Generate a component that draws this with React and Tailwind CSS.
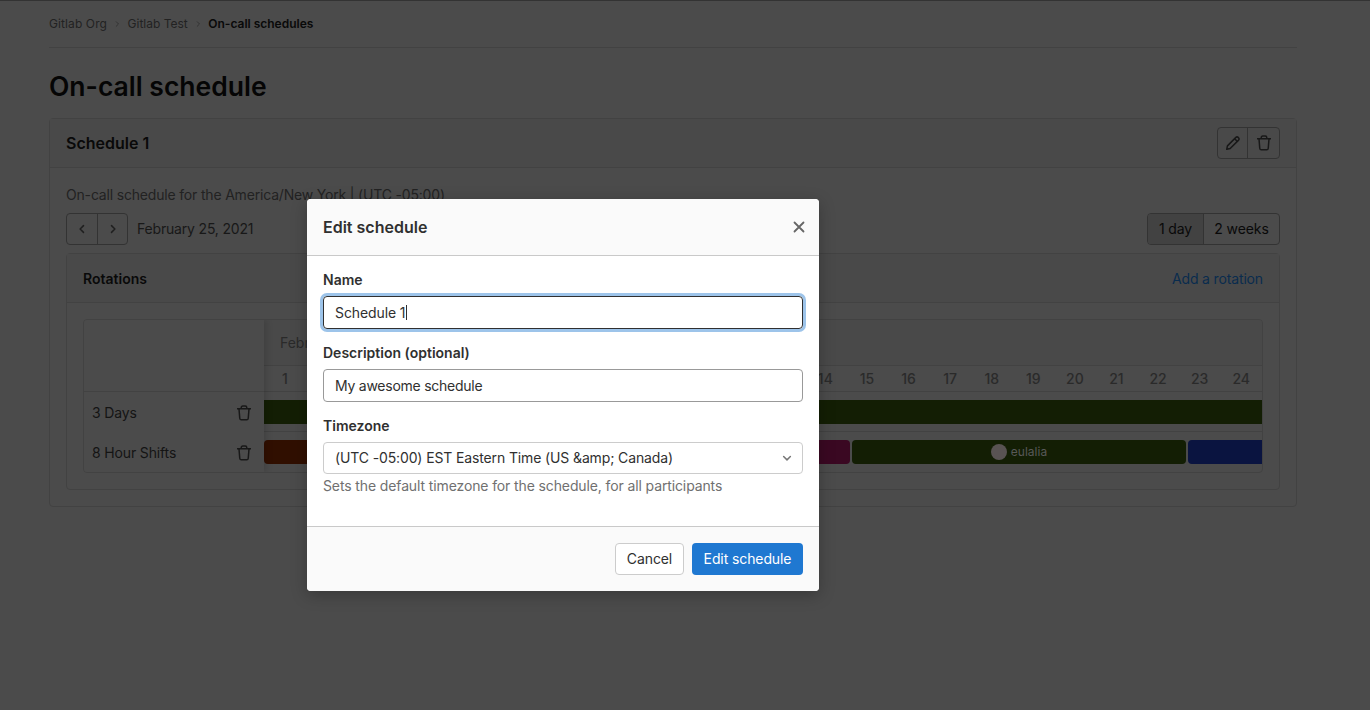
const hours = Array.from({ length: 24 }, (_, i) => i + 1);

function Trash({ className = "" }) {
  return (
    <svg viewBox="0 0 16 16" className={className} fill="none" stroke="currentColor" strokeWidth="1.5">
      <path d="M1 3.75h14" />
      <path d="M5.25 3.5V2.6c0-.9.6-1.6 1.5-1.6h2.5c.9 0 1.5.7 1.5 1.6v.9" />
      <path d="M3 4l.75 9.2c.07.9.75 1.55 1.6 1.55h5.3c.85 0 1.53-.65 1.6-1.55L13 4" />
    </svg>
  );
}

function Pencil({ className = "" }) {
  return (
    <svg viewBox="0 0 16 16" className={className} fill="none" stroke="currentColor" strokeWidth="1.5" strokeLinejoin="round">
      <path d="M1.75 14.25l.7-3.4L10.9 2.4a1.6 1.6 0 0 1 2.25 0l.45.45a1.6 1.6 0 0 1 0 2.25l-8.45 8.45z" />
      <path d="M9.6 3.7l2.7 2.7" />
    </svg>
  );
}

function Chevron({ dir, className = "" }) {
  const d = { left: "M10 3.5L5.5 8l4.5 4.5", right: "M6 3.5L10.5 8 6 12.5", down: "M3.5 6L8 10.5 12.5 6" }[dir];
  return (
    <svg viewBox="0 0 16 16" className={className} fill="none" stroke="currentColor" strokeWidth="2" strokeLinecap="round" strokeLinejoin="round">
      <path d={d} />
    </svg>
  );
}

function Rotation({ name, last }) {
  return (
    <div className={`flex items-center justify-between pl-2 pr-[12px] text-sm tracking-[-0.15px] text-[#141414] ${last ? "h-[40px]" : "h-[41px]"}`}>
      <span>{name}</span>
      <Trash className="w-4 h-4 text-[#181818]" />
    </div>
  );
}

function Page() {
  return (
    <div className="h-[710px] bg-[#4b4b4b] border-t border-[#333] pl-[49px] pr-[73px]">
      <nav className="h-[47px] flex items-center gap-[6px] text-xs border-b border-[#424242]">
        <span className="text-[#222] tracking-[0.1px]">Gitlab Org</span>
        <Chevron dir="right" className="w-[8.5px] h-[8px] text-[#333]" />
        <span className="text-[#222]">Gitlab Test</span>
        <Chevron dir="right" className="w-[8.5px] h-[8px] text-[#333]" />
        <span className="font-semibold text-[#090909]">On-call schedules</span>
      </nav>
      <h1 className="h-[70px] pt-[20px] text-[26.5px] leading-[36px] font-semibold text-[#050505]">On-call schedule</h1>

      <section className="h-[389px] border border-[#424242] rounded">
        <header className="h-[49px] px-4 flex items-center justify-between bg-[#494949] border-b border-[#424242]">
          <h2 className="text-base font-semibold text-[#090909]">Schedule 1</h2>
          <div className="flex h-8 border border-[#333] rounded">
            <div className="w-[30px] flex items-center justify-center border-r border-[#333] text-[#181818]">
              <Pencil className="w-4 h-4" />
            </div>
            <div className="w-[31px] flex items-center justify-center text-[#181818]">
              <Trash className="w-4 h-4" />
            </div>
          </div>
        </header>

        <div className="px-4">
          <p className="pt-[18px] h-[45px] text-sm leading-[17px] tracking-[-0.18px] text-[#222]">
            On-call schedule for the America/New York | (UTC -05:00)
          </p>
          <div className="flex items-center justify-between h-8">
            <div className="flex items-center gap-[9px]">
              <div className="flex h-8 border border-[#333] rounded">
                <div className="w-[31px] flex items-center justify-center border-r border-[#333] text-[#1f1f1f]">
                  <Chevron dir="left" className="w-3 h-3" />
                </div>
                <div className="w-[29px] flex items-center justify-center text-[#1f1f1f]">
                  <Chevron dir="right" className="w-3 h-3" />
                </div>
              </div>
              <span className="text-sm tracking-[-0.18px] text-[#181818]">February 25, 2021</span>
            </div>
            <div className="flex h-8 border border-[#333] rounded text-sm tracking-[-0.1px] text-[#090909] overflow-hidden">
              <div className="w-[56px] flex items-center justify-center border-r border-[#333] bg-[#424242]">1 day</div>
              <div className="w-[75px] flex items-center justify-center">2 weeks</div>
            </div>
          </div>

          <div className="mt-2 h-[237px] border border-[#424242] rounded">
            <div className="h-[49px] pt-px px-4 flex items-center justify-between bg-[#494949] border-b border-[#424242]">
              <h3 className="text-sm font-semibold text-[#090909]">Rotations</h3>
              <span className="text-sm tracking-[-0.15px] text-[#0a2c4e]">Add a rotation</span>
            </div>
            <div className="p-4">
              <div className="flex h-[154px] border border-[#424242] rounded overflow-hidden">
                <div className="w-[180px] shrink-0 relative z-10 bg-[#4b4b4b] shadow-[3px_0_6px_rgba(0,0,0,0.12)]">
                  <div className="h-[72px] border-b border-[#424242]" />
                  <Rotation name="3 Days" />
                  <Rotation name="8 Hour Shifts" last />
                </div>
                <div className="flex-1 min-w-0">
                  <div className="h-[46px] bg-[#494949] border-b border-[#424242] flex items-center px-4 text-sm text-[#2a2a2a]">
                    February 2021
                  </div>
                  <div className="h-[26px] grid grid-cols-24 items-center border-b border-[#424242] text-sm font-medium text-[#2a2a2a] text-center">
                    {hours.map((h) => (
                      <span key={h}>{h}</span>
                    ))}
                  </div>
                  <div className="h-[40px] pt-2 border-b border-[#424242]">
                    <div className="h-6 bg-[#131e04]" />
                  </div>
                  <div className="pt-2 flex gap-[2px] h-[40px]">
                    <div className="w-[252px] h-6 rounded-sm bg-[#300f00]" />
                    <div className="w-[332px] h-6 rounded-sm bg-[#3a0822]" />
                    <div className="w-[334px] h-6 rounded-sm bg-[#131e04] flex items-center justify-center gap-1 text-xs text-[#585858]">
                      <span className="w-4 h-4 rounded-full bg-[#595353]" />
                      <span>eulalia</span>
                    </div>
                    <div className="flex-1 h-6 rounded-l-sm bg-[#0a1440]" />
                  </div>
                </div>
              </div>
            </div>
          </div>
        </div>
      </section>
    </div>
  );
}

function Label({ children }) {
  return <label className="block h-4 mb-2 text-sm leading-4 font-semibold text-[#303030]">{children}</label>;
}

function Modal() {
  return (
    <div className="absolute left-[307px] top-[199px] w-[512px] h-[392px] bg-white rounded shadow-[0_4px_16px_rgba(0,0,0,0.25)] overflow-hidden flex flex-col">
      <div className="h-[57px] shrink-0 pl-4 pr-3 flex items-center justify-between bg-[#fafafa] border-b border-[#c9c9c9]">
        <h4 className="text-base font-semibold text-[#303030]">Edit schedule</h4>
        <svg viewBox="0 0 16 16" className="w-4 h-4 text-[#666]" fill="none" stroke="currentColor" strokeWidth="1.8" strokeLinecap="round">
          <path d="M3.5 3.5l9 9M12.5 3.5l-9 9" />
        </svg>
      </div>
      <div className="flex-1 px-4 pt-4">
        <Label>Name</Label>
        <div className="h-[33px] px-[11px] flex items-center rounded border border-[#303030] shadow-[0_0_0_3px_#9dc4ea] text-sm tracking-[-0.1px] text-[#303030]">
          Schedule 1<span className="inline-block w-px h-[15px] ml-px bg-[#303030]" />
        </div>
        <div className="mt-4">
          <Label>Description (optional)</Label>
          <div className="h-[33px] px-[11px] flex items-center rounded border border-[#999] text-sm tracking-[-0.25px] text-[#303030]">
            My awesome schedule
          </div>
        </div>
        <div className="mt-4">
          <Label>Timezone</Label>
          <div className="h-[32px] pl-[11px] pr-[9px] flex items-center justify-between rounded border border-[#ccc] text-sm tracking-[-0.13px] text-[#303030]">
            <span>(UTC -05:00) EST Eastern Time (US &amp;amp; Canada)</span>
            <Chevron dir="down" className="w-3 h-3 text-[#777]" />
          </div>
          <p className="mt-1 text-sm leading-4 tracking-[-0.12px] text-[#707070]">Sets the default timezone for the schedule, for all participants</p>
        </div>
      </div>
      <div className="h-[65px] shrink-0 px-4 flex items-center justify-end gap-2 bg-[#fafafa] border-t border-[#c9c9c9]">
        <button className="h-8 w-[69px] bg-white border border-[#ccc] rounded text-sm tracking-[-0.1px] text-[#303030]">Cancel</button>
        <button className="h-8 w-[111px] bg-[#1f78d1] rounded text-sm tracking-[-0.1px] text-white">Edit schedule</button>
      </div>
    </div>
  );
}

export default function App() {
  return (
    <div className="relative w-[1370px] h-[710px] overflow-hidden font-['Inter',sans-serif]">
      <Page />
      <Modal />
    </div>
  );
}
